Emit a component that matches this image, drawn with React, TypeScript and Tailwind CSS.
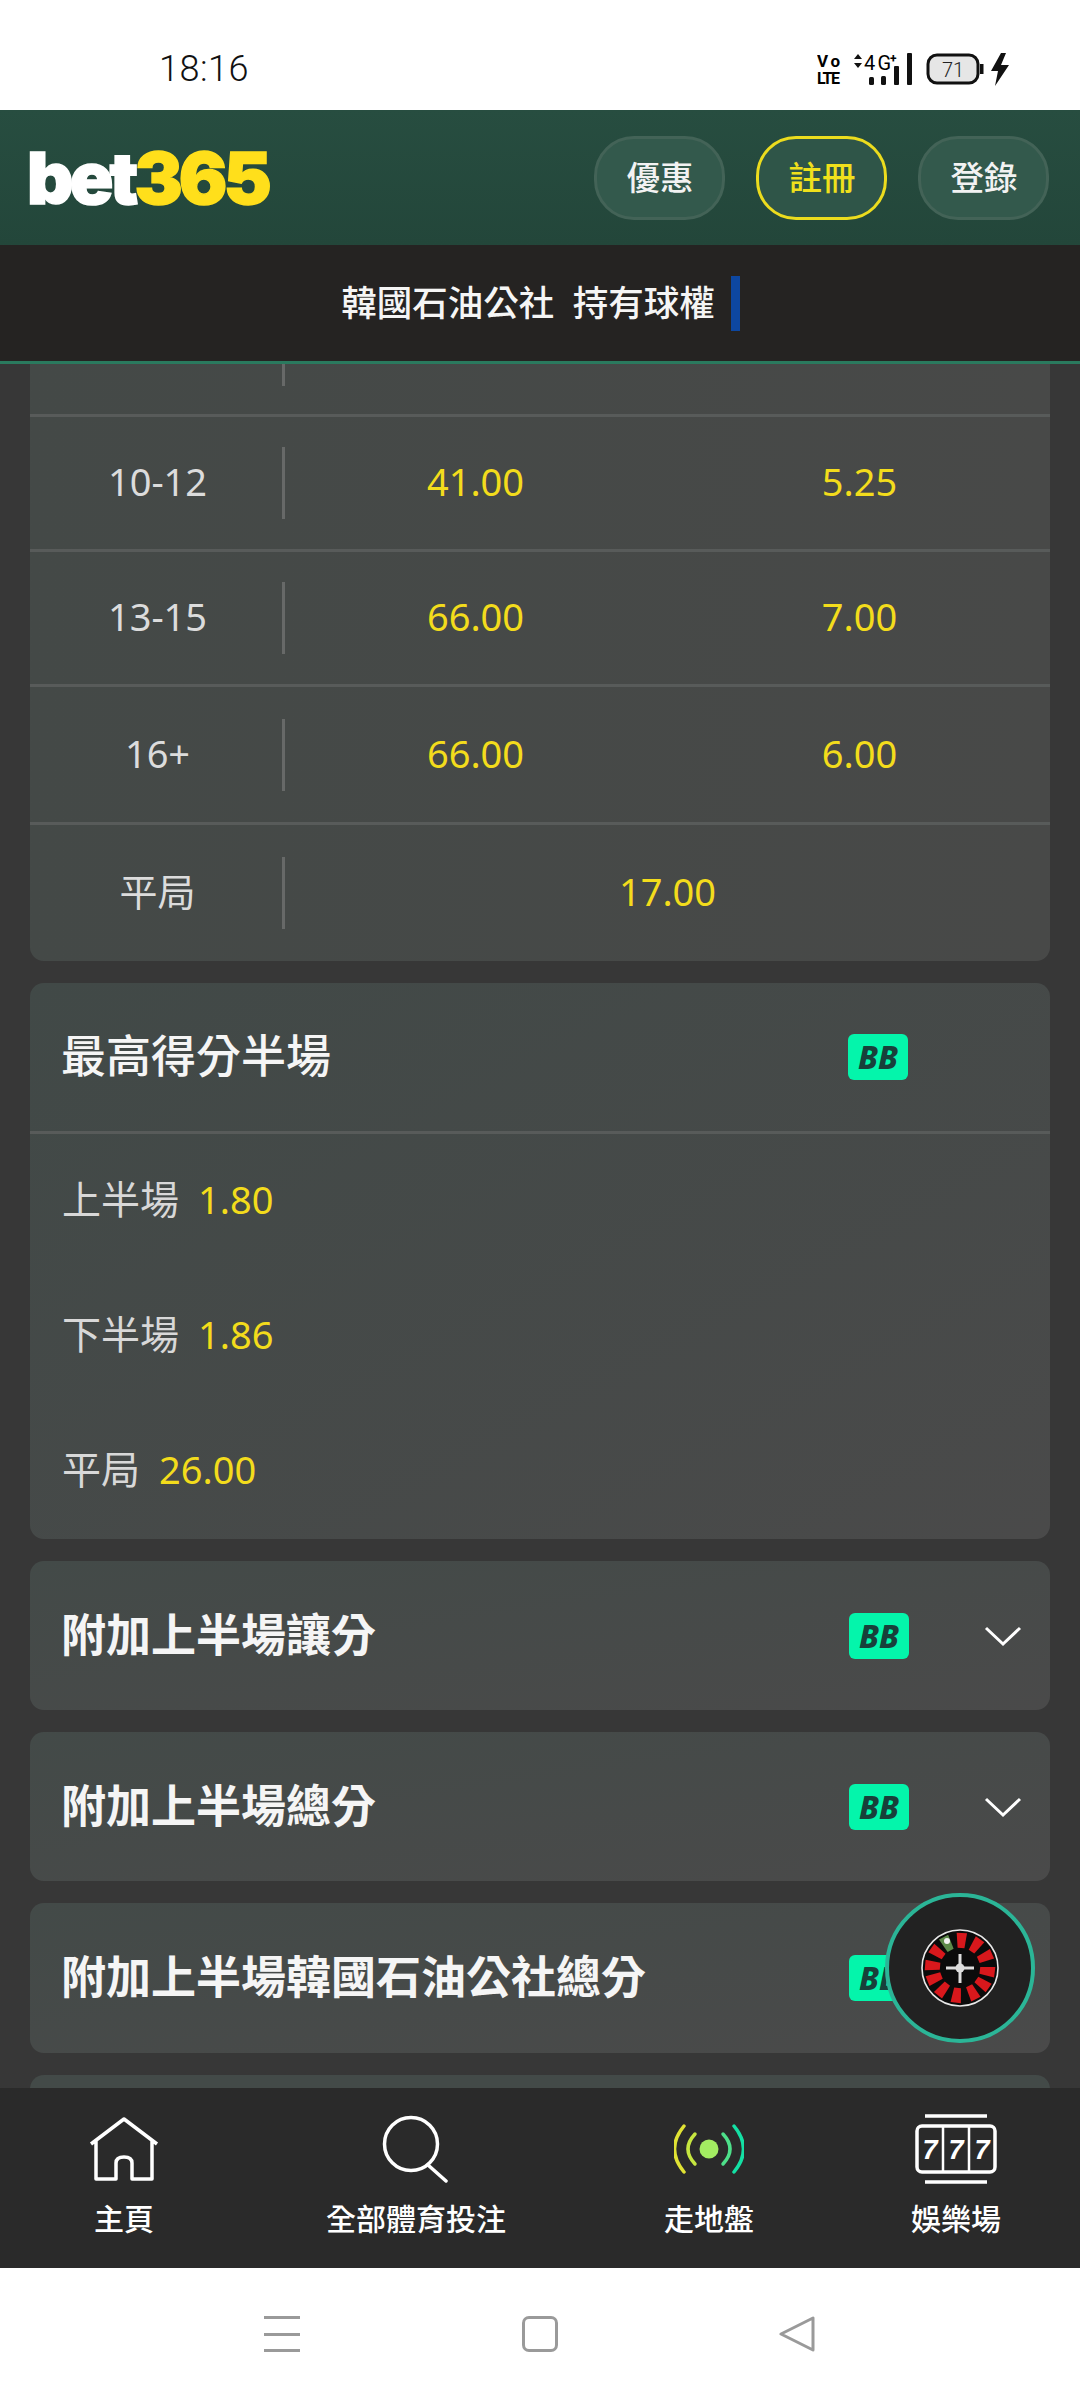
import React from "react";

const font = { fontFamily: '"Noto Sans", "Noto Sans CJK TC", sans-serif' };

const BB = () => (
  <span className="flex h-[46px] w-[60px] items-center justify-center rounded-[6px] bg-[#04f5ab] text-[32px] font-extrabold italic leading-none text-[#17403a]">
    BB
  </span>
);

const Chevron = () => (
  <svg width="38" height="22" viewBox="0 0 38 22" fill="none" stroke="#ffffff" strokeWidth="3">
    <path d="M2 3 L19 19 L36 3" />
  </svg>
);

const OddsRow = ({ label, odds, h, last }: { label: string; odds: string[]; h: string; last?: boolean }) => (
  <div className={`flex items-center ${h} ${last ? "" : "border-b-[3px] border-[#585b5a]"}`}>
    <div className="flex h-[72px] w-[255px] shrink-0 items-center justify-center border-r-[3px] border-[#676968] pb-[3px] pl-[3px] text-[38px] text-[#dcdcdc]">
      {label}
    </div>
    {odds.map((o) => (
      <div key={o} className="flex-1 pb-[3px] text-center text-[38px] text-[#f3dc1c] [&:nth-child(3)]:pl-[3px]">
        {o}
      </div>
    ))}
  </div>
);

const Collapsed = ({ title, h }: { title: string; h: string }) => (
  <div className={`flex ${h} shrink-0 items-center rounded-[14px] bg-gradient-to-br from-[#434a48] to-[#4a4a4a] pl-[31px]`}>
    <div className="flex-1 pb-[2px] text-[45px] font-semibold text-[#f5f5f5]">{title}</div>
    <BB />
    <div className="ml-[75px] mr-[28px]">
      <Chevron />
    </div>
  </div>
);

const HalfRow = ({ label, odds }: { label: string; odds: string }) => (
  <div className="flex h-[135px] items-center pb-[4px] pl-[32px]">
    <span className="text-[39px] text-[#d8d8d8]">{label}</span>
    <span className="ml-[19px] text-[38px] text-[#f3dc1c]">{odds}</span>
  </div>
);

const Roulette = () => {
  const angles = [3, 35, 66, 97, 125, 153, 187, 219, 248, 275, 305, 332];
  return (
    <svg width="80" height="80" viewBox="-40 -40 80 80">
      <circle r="38" fill="#0b0b0b" stroke="#e8e8e8" strokeWidth="1.6" />
      {angles.map((a, i) => (
        <path key={a} d="M-3.4 -20 L3.4 -20 L5.2 -35 L-5.2 -35 Z" fill={i === 11 ? "#5d8a4a" : "#d8181c"} transform={`rotate(${a})`} />
      ))}
      <circle cx="-13" cy="-27" r="3" fill="#f2f2f2" />
      <path d="M-14 0 H14 M0 -14 V15" stroke="#dddddd" strokeWidth="3" />
      <circle r="4.5" fill="#dddddd" />
    </svg>
  );
};

const NavTab = ({ label, icon, className }: { label: string; icon: React.ReactNode; className: string }) => (
  <div className={`flex h-full flex-col items-center ${className}`}>
    <div className="flex h-[78px] items-center justify-center">{icon}</div>
    <div className="mt-[11px] text-[30px] font-medium leading-[40px] text-white">{label}</div>
  </div>
);

export default function App() {
  return (
    <div style={font} className="relative flex h-[2400px] w-[1080px] flex-col overflow-hidden bg-white">
      {/* status bar */}
      <div className="flex h-[110px] shrink-0 items-center bg-white pl-[159px] pr-[70px] pt-[28px]">
        <span className="flex-1 font-['Roboto'] text-[36px] font-light tracking-[0.5px] text-[#111]">18:16</span>
        <div className="flex w-[193px] flex-col items-center font-['Roboto'] font-bold leading-none text-black">
          <svg width="193" height="36" viewBox="0 0 193 36">
            <text x="0" y="16" fontSize="17" fontWeight="700" fontFamily="Roboto" textLength="23">Vo</text>
            <text x="0" y="33" fontSize="16" fontWeight="700" fontFamily="Roboto" textLength="23">LTE</text>
            <path d="M37 8 L41 3 L45 8 Z M37 12 L41 17 L45 12 Z" fill="#111" />
            <text x="47" y="19" fontSize="20" fontWeight="400" fontFamily="Roboto" textLength="27">4G</text>
            <text x="73" y="12" fontSize="12" fontWeight="700" fontFamily="Roboto">+</text>
            <rect x="52" y="26" width="5" height="8" rx="1.5" fill="#111" />
            <rect x="64" y="25" width="5" height="9" rx="1.5" fill="#111" />
            <rect x="77" y="15" width="5" height="19" rx="1" fill="#111" />
            <rect x="90" y="2" width="5" height="32" rx="1" fill="#111" />
            <rect x="111" y="4" width="50" height="28" rx="9" fill="#e6e6e6" stroke="#111" strokeWidth="3" />
            <rect x="163" y="13" width="3.5" height="10" fill="#111" />
            <text x="136" y="26" fontSize="20" fontWeight="300" textAnchor="middle" fontFamily="Roboto" fill="#222">71</text>
            <path d="M184 2 L174 20 L181 20 L178 35 L192 14 L184 14 L189 2 Z" fill="#111" />
          </svg>
        </div>
      </div>

      {/* header */}
      <div className="flex h-[135px] shrink-0 items-center bg-gradient-to-b from-[#274d40] to-[#23463a] pl-[27px] pr-[31px]">
        <div className="flex-1 font-['Inter'] text-[72px] font-black leading-none tracking-[-3.8px] [-webkit-text-stroke:1.5px_currentColor]">
          <span className="text-white">bet</span>
          <span className="text-[#ffdf1b]">365</span>
        </div>
        <div className="flex items-center gap-[31px] text-[33.5px] font-medium">
          <div className="flex h-[84px] w-[131px] items-center justify-center rounded-[40px] border-[3px] border-[#436357] bg-[#33594c] pl-[1px] text-[#f2f2f2]">優惠</div>
          <div className="flex h-[84px] w-[131px] items-center justify-center rounded-[40px] border-[3px] border-[#ecdc1e] bg-[#2f5548] pl-[1px] text-[#f0e01c]">註冊</div>
          <div className="flex h-[84px] w-[131px] items-center justify-center rounded-[40px] border-[3px] border-[#436357] bg-[#33594c] pl-[1px] text-[#f2f2f2]">登錄</div>
        </div>
      </div>

      {/* match bar */}
      <div className="flex h-[119px] shrink-0 items-center justify-center border-b-[3px] border-[#2a7a5e] bg-[#252322] pl-[1px]">
        <span className="text-[35.5px] font-medium text-[#f5f5f5]">韓國石油公社&nbsp;&nbsp;持有球權</span>
        <span className="ml-[16px] h-[55px] w-[9px] bg-[#0d47a1]" />
      </div>

      {/* markets */}
      <div className="flex min-h-0 flex-1 flex-col gap-[22px] overflow-hidden bg-[#373737] px-[30px]">
        <div className="shrink-0 rounded-b-[14px] bg-gradient-to-r from-[#444947] to-[#484948]">
          <div className="flex h-[53px] items-start border-b-[3px] border-[#585b5a]">
            <div className="h-[22px] w-[255px] border-r-[3px] border-[#676968]" />
          </div>
          <OddsRow label="10-12" odds={["41.00", "5.25"]} h="h-[135px]" />
          <OddsRow label="13-15" odds={["66.00", "7.00"]} h="h-[135px]" />
          <OddsRow label="16+" odds={["66.00", "6.00"]} h="h-[138px]" />
          <OddsRow label="平局" odds={["17.00"]} h="h-[136px]" last />
        </div>

        <div className="h-[556px] shrink-0 rounded-[14px] bg-gradient-to-br from-[#414947] to-[#4a4a4a]">
          <div className="flex h-[151px] items-center border-b-[3px] border-[#585b5a] pl-[31px]">
            <div className="flex-1 pb-[2px] text-[45px] font-medium text-[#f5f5f5]">最高得分半場</div>
            <div className="mr-[142px]">
              <BB />
            </div>
          </div>
          <HalfRow label="上半場" odds="1.80" />
          <HalfRow label="下半場" odds="1.86" />
          <HalfRow label="平局" odds="26.00" />
        </div>

        <Collapsed title="附加上半場讓分" h="h-[149px]" />
        <Collapsed title="附加上半場總分" h="h-[149px]" />
        <Collapsed title="附加上半場韓國石油公社總分" h="h-[150px]" />
        <div className="h-[40px] shrink-0 rounded-t-[14px] bg-[#434a48]" />
      </div>

      {/* casino button */}
      <div className="absolute left-[885px] top-[1893px] flex h-[150px] w-[150px] items-center justify-center rounded-full border-[4px] border-[#2bb597] bg-[#222222]">
        <Roulette />
      </div>

      {/* bottom nav */}
      <div className="flex h-[180px] shrink-0 items-start bg-[#2a2a2a] pl-[94px] pt-[22px]">
        <NavTab
          label="主頁"
          className="w-[60px]"
          icon={
            <svg width="70" height="64" viewBox="0 0 70 64" fill="none" stroke="#fff" strokeWidth="3.5">
              <path d="M2 27 L35 2 L68 27 M7 23 V62 H27 V46 Q27 40 35 40 Q43 40 43 46 V62 H63 V23" strokeLinejoin="round" />
            </svg>
          }
        />
        <NavTab
          label="全部體育投注"
          className="ml-[172px] w-[180px]"
          icon={
            <svg width="68" height="68" viewBox="0 0 68 68" fill="none" stroke="#fff" strokeWidth="3.5">
              <circle cx="29" cy="29" r="26.5" />
              <path d="M46 50 L64 66" strokeLinecap="round" />
            </svg>
          }
        />
        <NavTab
          label="走地盤"
          className="ml-[158px] w-[90px]"
          icon={
            <svg width="70" height="50" viewBox="0 0 70 50" fill="none" strokeWidth="3.5" strokeLinecap="round">
              <circle cx="35" cy="25" r="9.5" fill="#a3ec62" stroke="none" />
              <path d="M10 2 Q-9 25 10 48" stroke="#e0e234" />
              <path d="M21 10 Q7 25 21 40" stroke="#c6e640" />
              <path d="M49 10 Q63 25 49 40" stroke="#4ee08a" />
              <path d="M60 2 Q79 25 60 48" stroke="#14e0a4" />
            </svg>
          }
        />
        <NavTab
          label="娛樂場"
          className="ml-[157px] w-[90px]"
          icon={
            <svg width="82" height="70" viewBox="0 0 82 70" fill="none" stroke="#fff" strokeWidth="3.5">
              <path d="M10 2 H72 M10 68 H72" />
              <rect x="2" y="12" width="78" height="46" rx="5" />
              <path d="M28 12 V58 M54 12 V58" strokeWidth="2.5" />
              <g fill="#fff" stroke="none" fontFamily="Liberation Sans" fontWeight="700" fontSize="27" fontStyle="italic" textAnchor="middle">
                <text x="15" y="45">7</text>
                <text x="41" y="45">7</text>
                <text x="67" y="45">7</text>
              </g>
            </svg>
          }
        />
      </div>

      {/* android nav */}
      <div className="flex h-[132px] shrink-0 items-start bg-white pl-[264px] pt-[48px]">
        <div className="flex h-[36px] w-[36px] flex-col justify-between">
          <div className="h-[3px] bg-[#9a9a9a]" />
          <div className="h-[3px] bg-[#9a9a9a]" />
          <div className="h-[3px] bg-[#9a9a9a]" />
        </div>
        <div className="ml-[222px] h-[36px] w-[36px] rounded-[7px] border-[3px] border-[#9a9a9a]" />
        <svg className="ml-[221px]" width="37" height="36" viewBox="0 0 37 36" fill="none" stroke="#9a9a9a" strokeWidth="3">
          <path d="M34 2 V34 L2 18 Z" strokeLinejoin="round" />
        </svg>
      </div>
    </div>
  );
}
